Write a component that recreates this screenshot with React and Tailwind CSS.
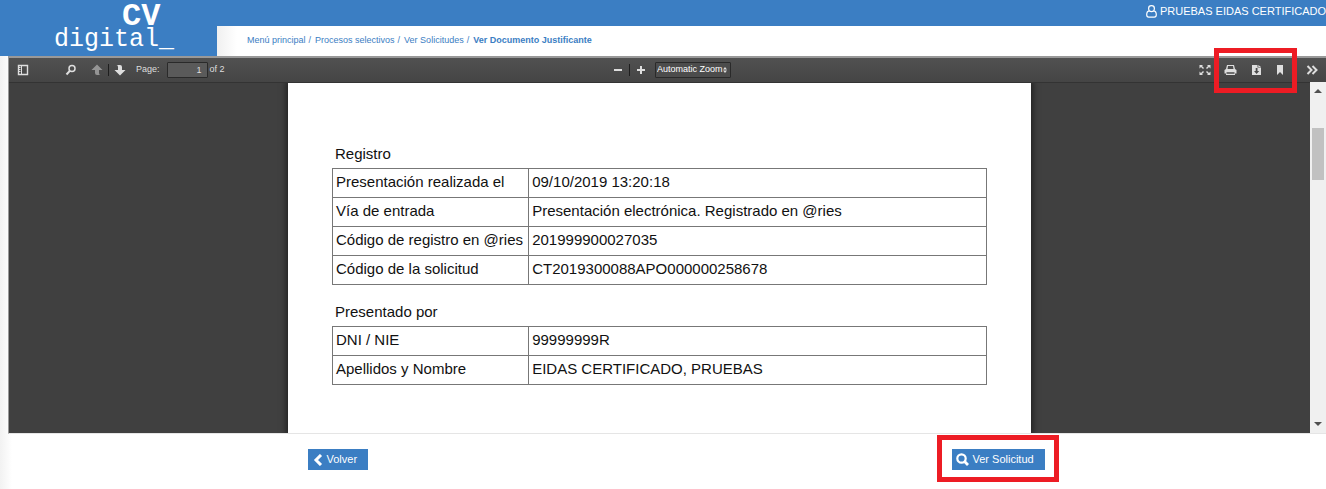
const CRUMBS = ['Menú principal', 'Procesos selectivos', 'Ver Solicitudes']

const REGISTRO = [
  ['Presentación realizada el', '09/10/2019 13:20:18'],
  ['Vía de entrada', 'Presentación electrónica. Registrado en @ries'],
  ['Código de registro en @ries', '201999900027035'],
  ['Código de la solicitud', 'CT2019300088APO000000258678'],
]

const PRESENTADO_POR = [
  ['DNI / NIE', '99999999R'],
  ['Apellidos y Nombre', 'EIDAS CERTIFICADO, PRUEBAS'],
]

function UserIcon() {
  return (
    <svg width="11" height="13" viewBox="0 0 11 13" fill="none" stroke="currentColor" strokeWidth="1.2" aria-hidden="true">
      <path d="M3.4 5.6C2.6 4.9 2.6 3.9 2.6 3.4a2.9 2.7 0 0 1 5.8 0c0 .5 0 1.5-.8 2.2M3.2 5.8C1.6 6 .7 7.4.7 9.8c0 1.5.8 2.4 2 2.4h5.6c1.2 0 2-.9 2-2.4 0-2.4-.9-3.8-2.5-4-.6.5-1.4.8-2.3.8s-1.7-.3-2.3-.8z" />
    </svg>
  )
}

function BackIcon() {
  return (
    <svg width="10" height="12" viewBox="0 0 10 12" fill="none" stroke="currentColor" strokeWidth="3" aria-hidden="true">
      <path d="M8 1 3 6l5 5" />
    </svg>
  )
}

function SearchIcon() {
  return (
    <svg width="13" height="13" viewBox="0 0 13 13" fill="none" stroke="currentColor" aria-hidden="true">
      <circle cx="5.5" cy="5.5" r="4.2" strokeWidth="2.2" />
      <path d="m8.600 8.600 3.400 3.400" strokeWidth="2.8" />
    </svg>
  )
}

function SidebarIcon() {
  return (
    <svg width="12" height="12" viewBox="0 0 12 12" fill="none" stroke="currentColor" aria-hidden="true">
      <path strokeWidth="1.4" d="M1.5 1.5h9v9h-9z" />
      <path d="M4.5 1.5v9M2 3.5h1.5M2 5.5h1.5M2 7.5h1.5" />
    </svg>
  )
}

function FindIcon() {
  return (
    <svg width="12" height="12" viewBox="0 0 12 12" fill="none" stroke="currentColor" aria-hidden="true">
      <circle cx="7" cy="4.5" r="3" strokeWidth="1.5" />
      <path d="M4.8 6.8 1.5 10.5" strokeWidth="2" />
    </svg>
  )
}

function UpIcon() {
  return (
    <svg width="12" height="12" viewBox="0 0 12 12" fill="currentColor" aria-hidden="true">
      <path d="M6 .5 11.5 6H8v3q0 2 1.5 2H6Q4 11 4 9V6H.5z" />
    </svg>
  )
}

function DownIcon() {
  return (
    <svg width="12" height="12" viewBox="0 0 12 12" fill="currentColor" aria-hidden="true">
      <path d="M6 11.5.5 6H4V3q0-2-1.5-2H6q2 0 2 2v3h3.5z" />
    </svg>
  )
}

function PresentationIcon() {
  return (
    <svg width="12" height="12" viewBox="0 0 12 12" fill="currentColor" aria-hidden="true">
      <path d="M.5 1H4L3 2l2 2-1 1-2-2-1.5 1.5zM11.5 1H8l1 1-2 2 1 1 2-2 1.5 1.5zM.5 11H4l-1-1 2-2-1-1-2 2L.5 7.5zM11.5 11H8l1-1-2-2 1-1 2 2 1.5-1.5z" />
    </svg>
  )
}

function PrintIcon() {
  return (
    <svg width="13" height="12" viewBox="0 0 13 12" fill="currentColor" aria-hidden="true">
      <path fillRule="evenodd" d="M3 1h7l1 4 1.5 1v3.5H11V11H2V9.5H.5V6L2 5zM4 2 3.5 5h6L9 2zM2.5 8.3v1.5h8V8.3z" />
    </svg>
  )
}

function DownloadIcon() {
  return (
    <svg width="11" height="12" viewBox="0 0 11 12" fill="currentColor" aria-hidden="true">
      <path fillRule="evenodd" d="M1 1h5.5v2.5H10V11H1zM4.700 4v3H3l2.6 3L8.200 7H6.5V4z" />
      <path d="M7.3 1 10 3H7.3z" />
    </svg>
  )
}

function BookmarkIcon() {
  return (
    <svg width="8" height="12" viewBox="0 0 8 12" fill="currentColor" aria-hidden="true">
      <path d="M1 1h6v10L4 8 1 11z" />
    </svg>
  )
}

function MoreIcon() {
  return (
    <svg width="12" height="12" viewBox="0 0 12 12" fill="none" stroke="currentColor" strokeWidth="2" aria-hidden="true">
      <path d="m1.5 2 4 4-4 4M6.5 2l4 4-4 4" />
    </svg>
  )
}

function ToolButton({ label, children, disabled }) {
  return (
    <button type="button" aria-label={label} disabled={disabled} className="flex disabled:opacity-50">
      {children}
    </button>
  )
}

function Separator() {
  return <span className="h-3 w-px bg-[#1e1e1e]" />
}

function Header() {
  return (
    <header className="flex h-14">
      <a href="#inicio" className="flex w-[217px] shrink-0 flex-col bg-[#3b7ec3] pl-[54px] font-['Liberation_Mono',monospace] text-white">
        <span className="pl-[68px] text-[32px] leading-[34px] font-bold">CV</span>
        <span className="text-[25px] leading-[11px]">digital_</span>
      </a>
      <div className="flex min-w-0 flex-1 flex-col">
        <div className="flex h-[26px] items-center justify-end gap-[3px] bg-[#3b7ec3] pb-1 text-[11px] whitespace-nowrap text-white">
          <UserIcon />
          <span>PRUEBAS EIDAS CERTIFICADO</span>
        </div>
        <nav aria-label="Ruta" className="flex flex-1 items-center gap-1 bg-linear-to-r from-[#f0f0f0] to-white to-[20px] pl-[30px] text-[9px] text-[#3b7ec3]">
          {CRUMBS.map((crumb) => (
            <span key={crumb} className="flex gap-[3px]">
              <a href="#ruta">{crumb}</a>
              <span>/</span>
            </span>
          ))}
          <span className="font-bold">Ver Documento Justificante</span>
        </nav>
      </div>
    </header>
  )
}

function Toolbar() {
  return (
    <div className="grid h-6 grid-cols-[1fr_auto_1fr] items-center bg-linear-to-b from-[#515151] to-[#454545] text-[9px] text-[#dedede]">
      <div className="flex items-center pl-2">
        <ToolButton label="Toggle Sidebar"><SidebarIcon /></ToolButton>
        <div className="flex items-center gap-[5px] pl-9">
          <ToolButton label="Find"><FindIcon /></ToolButton>
          <span className="w-1" />
          <ToolButton label="Previous Page" disabled><UpIcon /></ToolButton>
          <Separator />
          <ToolButton label="Next Page"><DownIcon /></ToolButton>
        </div>
        <label htmlFor="page" className="pl-[10px]">Page:</label>
        <input
          id="page"
          defaultValue="1"
          className="ml-[7px] h-4 w-[41px] rounded-[1px] border border-[#2a2a2a] bg-[#5a5a5a] pr-[5px] text-right text-[9px]"
        />
        <span className="pl-[2px]">of 2</span>
      </div>

      <div className="flex items-center gap-[6px] pl-[9px]">
        <ToolButton label="Zoom Out">
          <svg width="10" height="10" viewBox="0 0 10 10" fill="currentColor"><path d="M1 4h8v2H1z" /></svg>
        </ToolButton>
        <Separator />
        <ToolButton label="Zoom In">
          <svg width="10" height="10" viewBox="0 0 10 10" fill="currentColor"><path d="M4 1h2v3h3v2H6v3H4V6H1V4h3z" /></svg>
        </ToolButton>
        <div className="relative ml-[3px] flex">
          <select aria-label="Zoom" className="h-4 w-[76px] appearance-none rounded-[1px] border border-[#2a2a2a] bg-[#4c4c4c] pl-px text-[9px] text-white">
            <option>Automatic Zoom</option>
          </select>
          <svg className="absolute top-1 right-1" width="4" height="8" viewBox="0 0 4 8" fill="currentColor" aria-hidden="true">
            <path d="M0 3.5h4L2 1zM0 4.5h4L2 7z" />
          </svg>
        </div>
      </div>

      <div className="flex items-center justify-end pr-2">
        <ToolButton label="Presentation Mode"><PresentationIcon /></ToolButton>
        <div className="relative ml-[13px] flex items-center gap-[14px]">
          <ToolButton label="Print"><PrintIcon /></ToolButton>
          <ToolButton label="Download"><DownloadIcon /></ToolButton>
          <ToolButton label="Current View"><BookmarkIcon /></ToolButton>
          <span className="pointer-events-none absolute -top-4 -right-[13px] -left-[10px] h-[45px] border-5 border-[#ed1c24]" />
        </div>
        <span className="w-[22px]" />
        <ToolButton label="Tools"><MoreIcon /></ToolButton>
      </div>
    </div>
  )
}

function DataTable({ caption, rows }) {
  return (
    <table className="w-full border-collapse text-left">
      <caption className="h-[25px] pl-[3px] text-left">{caption}</caption>
      <tbody>
        {rows.map(([label, value]) => (
          <tr key={label} className="h-[29px]">
            <th scope="row" className="w-[30%] border border-[#777] pb-px pl-[3px] font-normal whitespace-nowrap">{label}</th>
            <td className="border border-[#777] pb-px pl-[3px]">{value}</td>
          </tr>
        ))}
      </tbody>
    </table>
  )
}

function Scrollbar() {
  return (
    <div className="flex w-4 shrink-0 flex-col items-center bg-[#f0f0f0] py-[7px] text-[#505050]" aria-hidden="true">
      <svg width="8" height="4" viewBox="0 0 8 4" fill="currentColor"><path d="M4 0 8 4H0z" /></svg>
      <span className="mt-[35px] h-[52px] w-3 bg-[#c1c1c1]" />
      <svg className="mt-auto" width="8" height="4" viewBox="0 0 8 4" fill="currentColor"><path d="M0 0h8L4 4z" /></svg>
    </div>
  )
}

export default function App() {
  return (
    <div className="flex min-h-screen flex-col bg-white font-['Liberation_Sans',Arial,sans-serif]">
      <Header />
      <div className="flex-1 bg-linear-to-r from-[#f2f2f2] to-white to-[12px] pl-2">
        <section aria-label="Documento" className="border-t-2 border-b border-l border-t-[#999] border-b-[#e5e5e5] border-l-[#999]">
          <Toolbar />
          <div className="flex">
            <div className="min-w-0 flex-1 overflow-hidden border-t border-[#333] bg-[#404040]">
              <article className="mx-auto flex w-[743px] max-w-full flex-col gap-4 bg-white px-11 pt-[60px] pb-12 text-[15px] text-[#111] shadow-[0_0_6px_2px_rgba(0,0,0,0.5)]">
                <DataTable caption="Registro" rows={REGISTRO} />
                <DataTable caption="Presentado por" rows={PRESENTADO_POR} />
              </article>
            </div>
            <Scrollbar />
          </div>
        </section>

        <div className="pl-[18px]">
          <footer className="mx-auto flex w-[737px] max-w-full justify-between pt-[15px] text-[11px] text-white">
            <button type="button" className="flex h-[21px] w-[60px] items-center gap-1 bg-[#3b7ec3] pl-[5px]">
              <BackIcon />
              Volver
            </button>
            <div className="relative">
              <button type="button" className="flex h-[21px] w-[93px] items-center gap-1 bg-[#3b7ec3] pl-1 whitespace-nowrap">
                <SearchIcon />
                Ver Solicitud
              </button>
              <span className="pointer-events-none absolute -top-[14px] -right-[14px] -left-[15px] h-[47px] border-5 border-[#ed1c24]" />
            </div>
          </footer>
        </div>
      </div>
    </div>
  )
}
